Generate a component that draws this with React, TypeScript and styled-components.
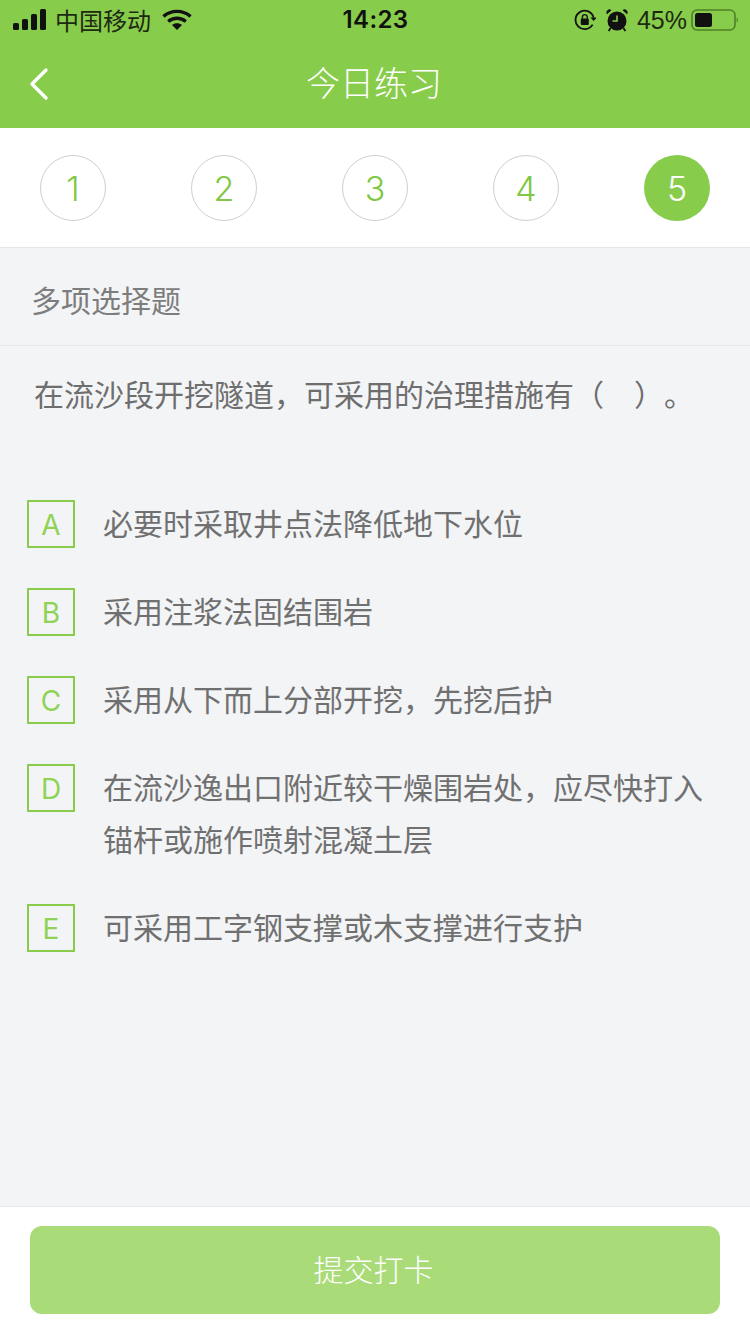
import React from "react";
import styled, { createGlobalStyle } from "styled-components";

const cjk = `"Noto Sans CJK SC", "Noto Sans", sans-serif`;
const green = "#88cc4b";

const Global = createGlobalStyle`
  html, body { margin: 0; padding: 0; background: #f3f4f6; }
  * { box-sizing: border-box; }
`;

const Page = styled.div`
  width: 750px;
  height: 1334px;
  display: flex;
  flex-direction: column;
  font-family: ${cjk};
  font-weight: 400;
  background: #f3f4f6;
  overflow: hidden;
`;

const Header = styled.header`
  height: 128px;
  flex: none;
  background: ${green};
  display: flex;
  flex-direction: column;
`;

const StatusBar = styled.div`
  height: 40px;
  flex: none;
  display: grid;
  grid-template-columns: 1fr auto 1fr;
  align-items: center;
  padding: 0 12px 0 13px;
  color: #111;
`;

const StatusLeft = styled.div`
  display: flex;
  align-items: center;
  gap: 8px;
`;

const Carrier = styled.span`
  font-size: 24px;
  line-height: 40px;
  font-weight: 400;
  color: #1d2a12;
  margin-right: 3px;
`;

const Clock = styled.span`
  font-family: "Inter", "Liberation Sans", sans-serif;
  font-size: 24px;
  font-weight: 600;
  line-height: 40px;
  letter-spacing: 0.4px;
`;

const StatusRight = styled.div`
  display: flex;
  align-items: center;
  justify-content: flex-end;
  gap: 10px;
`;

const Percent = styled.span`
  font-family: "Liberation Sans", sans-serif;
  font-size: 25px;
  font-weight: 400;
  line-height: 40px;
  color: #1d2a12;
  margin-left: -1px;
  margin-right: -6px;
`;

const NavBar = styled.nav`
  flex: 1;
  display: flex;
  align-items: center;
  justify-content: center;
  position: relative;
  padding-bottom: 4px;
`;

const BackIcon = styled.svg`
  position: absolute;
  left: 28px;
  top: 27px;
`;

const Title = styled.h1`
  margin: 0 2px 0 0;
  font-size: 34px;
  font-weight: 300;
  line-height: 84px;
  color: #fff;
`;

const Steps = styled.div`
  height: 120px;
  flex: none;
  background: #fff;
  border-bottom: 1px solid #e6e7ea;
  display: flex;
  align-items: flex-start;
  justify-content: space-between;
  padding: 27px 40px 0;
`;

const Step = styled.div<{ $active?: boolean }>`
  width: 66px;
  height: 66px;
  border-radius: 50%;
  display: flex;
  align-items: center;
  justify-content: center;
  font-size: 34px;
  font-family: "Inter", "Open Sans", sans-serif;
  font-weight: 300;
  color: ${(p) => (p.$active ? "#fff" : "#7fc845")};
  background: ${(p) => (p.$active ? green : "#fff")};
  border: ${(p) => (p.$active ? "none" : "1px solid #cfcfcf")};
`;

const Main = styled.main`
  flex: 1;
  display: flex;
  flex-direction: column;
`;

const SectionLabel = styled.div`
  height: 98px;
  flex: none;
  padding-left: 31px;
  padding-top: 4px;
  display: flex;
  align-items: center;
  font-size: 30px;
  color: #7d7d7d;
  border-bottom: 1px solid #e6e7ea;
`;

const Question = styled.p`
  margin: 0;
  padding: 21px 0 0 34px;
  font-size: 30px;
  line-height: 52px;
  color: #6e6e6e;
  white-space: pre;
  text-spacing-trim: space-all;
`;

const Options = styled.ul`
  list-style: none;
  margin: 0;
  padding: 77px 27px 0;
  display: flex;
  flex-direction: column;
  gap: 36px;
`;

const Option = styled.li`
  display: flex;
  align-items: flex-start;
  gap: 28px;
`;

const Letter = styled.span`
  width: 48px;
  height: 48px;
  flex: none;
  margin-top: 4px;
  padding-top: 1px;
  border: 2px solid ${green};
  display: flex;
  align-items: center;
  justify-content: center;
  font-family: "Inter", "Open Sans", sans-serif;
  font-size: 28px;
  font-weight: 400;
  color: #8fd255;
`;

const OptionText = styled.span`
  font-size: 30px;
  line-height: 52px;
  color: #707070;
  width: 610px;
`;

const Footer = styled.footer`
  height: 128px;
  flex: none;
  background: #fff;
  border-top: 1px solid #e6e7ea;
  padding: 19px 30px 0;
`;

const Submit = styled.button`
  width: 100%;
  height: 88px;
  border: none;
  border-radius: 12px;
  background: #a9dc79;
  color: #fff;
  font-family: ${cjk};
  font-weight: 300;
  font-size: 30px;
  padding: 0 3px 4px 0;
`;

const options = [
  ["A", "必要时采取井点法降低地下水位"],
  ["B", "采用注浆法固结围岩"],
  ["C", "采用从下而上分部开挖，先挖后护"],
  ["D", "在流沙逸出口附近较干燥围岩处，应尽快打入锚杆或施作喷射混凝土层"],
  ["E", "可采用工字钢支撑或木支撑进行支护"],
];

const Signal = () => (
  <svg width="34" height="22" viewBox="0 0 34 22" fill="#111">
    <rect x="0" y="14" width="6" height="7" rx="1.5" />
    <rect x="9" y="10" width="6" height="11" rx="1.5" />
    <rect x="18" y="5" width="6" height="16" rx="1.5" />
    <rect x="27" y="0" width="6" height="21" rx="1.5" />
  </svg>
);

const Wifi = () => (
  <svg width="30" height="22" viewBox="0 0 30 22" fill="none" stroke="#111" strokeWidth="3.4">
    <path d="M1.5 7.5C9 .7 21 .7 28.5 7.5" />
    <path d="M6.2 12.5c5-4.3 12.6-4.3 17.6 0" />
    <path d="M15 21l-5-5c2.8-2.2 7.2-2.2 10 0z" fill="#111" stroke="none" />
  </svg>
);

const RotationLock = () => (
  <svg width="22" height="22" viewBox="0 0 22 22" fill="none">
    <path d="M18.6 15.6A9.2 9.2 0 1 1 19.6 8.6" stroke="#111" strokeWidth="1.8" />
    <path d="M16.4 8.5h6.2l-3 3.6z" fill="#111" />
    <rect x="6.8" y="9.6" width="8" height="6.4" rx="1" fill="#111" />
    <path d="M8.4 9.8V8a2.4 2.4 0 0 1 4.8 0v1.8" stroke="#111" strokeWidth="1.4" />
  </svg>
);

const Alarm = () => (
  <svg width="22" height="24" viewBox="0 0 22 24" fill="none">
    <circle cx="11" cy="13" r="9.5" fill="#111" />
    <path d="M11 7.5V13H6.5" stroke={green} strokeWidth="1.6" />
    <path d="M1 6.2 5.4 2.2A3 3 0 0 0 1 6.2zM21 6.2 16.6 2.2A3 3 0 0 1 21 6.2z" fill="#111" />
    <path d="M4.6 20 2.6 23M17.4 20l2 3" stroke="#111" strokeWidth="1.8" />
  </svg>
);

const Battery = () => (
  <svg width="47" height="24" viewBox="0 0 47 24" fill="none">
    <rect x="1" y="2" width="43" height="20" rx="5" stroke="#4f7f2a" strokeWidth="1.6" />
    <rect x="4" y="5" width="17" height="14" rx="2.5" fill="#111" />
    <path d="M45.6 9.5c.9.5 1.200 1.400 1.200 2.500s-.3 2-1.200 2.500z" fill="#4f7f2a" />
  </svg>
);

export default function App() {
  return (
    <Page>
      <Global />
      <Header>
        <StatusBar>
          <StatusLeft>
            <Signal />
            <Carrier>中国移动</Carrier>
            <Wifi />
          </StatusLeft>
          <Clock>14:23</Clock>
          <StatusRight>
            <RotationLock />
            <Alarm />
            <Percent>45%</Percent>
            <Battery />
          </StatusRight>
        </StatusBar>
        <NavBar>
          <BackIcon width="22" height="34" viewBox="0 0 22 34" fill="none">
            <path d="M18 3 4 17l14 14" stroke="#fff" strokeWidth="3.4" strokeLinecap="round" strokeLinejoin="round" />
          </BackIcon>
          <Title>今日练习</Title>
        </NavBar>
      </Header>
      <Steps>
        {[1, 2, 3, 4, 5].map((n) => (
          <Step key={n} $active={n === 5}>
            {n}
          </Step>
        ))}
      </Steps>
      <Main>
        <SectionLabel>多项选择题</SectionLabel>
        <Question>在流沙段开挖隧道，可采用的治理措施有（　）。</Question>
        <Options>
          {options.map(([letter, text]) => (
            <Option key={letter}>
              <Letter>{letter}</Letter>
              <OptionText>{text}</OptionText>
            </Option>
          ))}
        </Options>
      </Main>
      <Footer>
        <Submit>提交打卡</Submit>
      </Footer>
    </Page>
  );
}
